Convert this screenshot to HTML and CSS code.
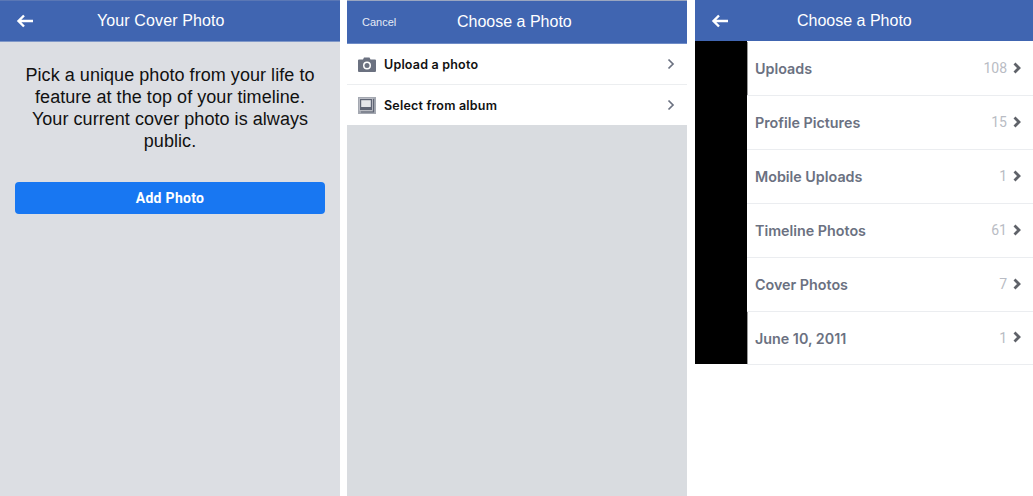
FILE: index.html
```html
<!DOCTYPE html>
<html lang="en">
<head>
<meta charset="utf-8">
<title>Choose a Photo</title>
<link rel="stylesheet" href="styles.css">
</head>
<body>
<div class="screens">
  <section class="panel panel-cover">
    <header class="bar bar-cover">
      <svg class="back" viewBox="0 0 18 14" aria-hidden="true"><path d="M17 7H3M8 1.500 2.500 7 8 12.500" /></svg>
      <h1 class="title title-cover">Your Cover Photo</h1>
    </header>
    <p class="intro">Pick a unique photo from your life to feature at the top of your timeline. Your current cover photo is always public.</p>
    <div class="btn">Add Photo</div>
  </section>

  <section class="panel panel-source">
    <header class="bar bar-source">
      <span class="cancel">Cancel</span>
      <h1 class="title title-source">Choose a Photo</h1>
    </header>
    <ul class="sources">
      <li class="source">
        <svg class="src-icon" viewBox="0 0 18 15" aria-hidden="true"><path fill="#6b7180" fill-rule="evenodd" d="M1 2.500h4L6 .5h5.500l1 2H17a1 1 0 0 1 1 1V14a1 1 0 0 1-1 1H1a1 1 0 0 1-1-1V3.500a1 1 0 0 1 1-1ZM9 4.500a4 4 0 1 0 0 8 4 4 0 0 0 0-8Z"/><circle cx="9" cy="8.500" r="2.500" fill="#6b7180"/></svg>
        <span class="src-label">Upload a photo</span>
        <svg class="chev" viewBox="0 0 8 12" aria-hidden="true"><path d="M1.500 1.500 6 6l-4.500 4.500"/></svg>
      </li>
      <li class="source">
        <svg class="src-icon src-album" viewBox="0 0 18 17" aria-hidden="true"><rect width="18" height="17" fill="#a4a8b1"/><rect x="1.500" y="1.500" width="13" height="12" fill="#fff"/><rect x="2.500" y="2.500" width="11" height="10" fill="#e4e6ea" stroke="#5f6575" stroke-width="1.400"/><rect x="3" y="10" width="10" height="2.500" fill="#5f6575"/><path d="M15.500 2v13H3" fill="none" stroke="#5f6575" stroke-width="1.200"/></svg>
        <span class="src-label">Select from album</span>
        <svg class="chev" viewBox="0 0 8 12" aria-hidden="true"><path d="M1.500 1.500 6 6l-4.500 4.500"/></svg>
      </li>
    </ul>
  </section>

  <section class="panel panel-albums">
    <header class="bar bar-albums">
      <svg class="back" viewBox="0 0 18 14" aria-hidden="true"><path d="M17 7H3M8 1.500 2.500 7 8 12.500" /></svg>
      <h1 class="title title-albums">Choose a Photo</h1>
    </header>
    <div class="albums">
      <div class="thumbs"></div>
      <ul class="album-list">
        <li class="album"><span class="album-name">Uploads</span><span class="count">108</span><svg class="chev chev-bold" viewBox="0 0 8 12" aria-hidden="true"><path d="M1.500 1.500 6 6l-4.500 4.500"/></svg></li>
        <li class="album"><span class="album-name">Profile Pictures</span><span class="count">15</span><svg class="chev chev-bold" viewBox="0 0 8 12" aria-hidden="true"><path d="M1.500 1.500 6 6l-4.500 4.500"/></svg></li>
        <li class="album"><span class="album-name">Mobile Uploads</span><span class="count">1</span><svg class="chev chev-bold" viewBox="0 0 8 12" aria-hidden="true"><path d="M1.500 1.500 6 6l-4.500 4.500"/></svg></li>
        <li class="album"><span class="album-name">Timeline Photos</span><span class="count">61</span><svg class="chev chev-bold" viewBox="0 0 8 12" aria-hidden="true"><path d="M1.500 1.500 6 6l-4.500 4.500"/></svg></li>
        <li class="album"><span class="album-name">Cover Photos</span><span class="count">7</span><svg class="chev chev-bold" viewBox="0 0 8 12" aria-hidden="true"><path d="M1.500 1.500 6 6l-4.500 4.500"/></svg></li>
        <li class="album"><span class="album-name">June 10, 2011</span><span class="count">1</span><svg class="chev chev-bold" viewBox="0 0 8 12" aria-hidden="true"><path d="M1.500 1.500 6 6l-4.500 4.500"/></svg></li>
      </ul>
    </div>
  </section>
</div>
</body>
</html>
```

FILE: styles.css
```css
* { box-sizing: border-box; }
html, body { margin: 0; padding: 0; }
body {
  width: 1033px;
  height: 496px;
  overflow: hidden;
  background: #fff;
  font-family: "Liberation Sans", Arial, sans-serif;
}
ul { list-style: none; margin: 0; padding: 0; }
h1 { margin: 0; font-weight: 400; }

.screens { display: flex; height: 496px; }
.panel { height: 496px; flex: none; }
.panel-cover { width: 340px; background: #dcdee3; margin-right: 7px; }
.panel-source { width: 340px; background: #d9dce0; margin-right: 8px; }
.panel-albums { width: 338px; background: #fff; }

.bar {
  display: flex;
  align-items: center;
  background: #4065b1;
  color: #fff;
}
.bar-cover { height: 42px; border-top: 1px solid #5a77b5; border-bottom: 1px solid #7f97c8; }
.bar-source { height: 44px; border-top: 1px solid #9aa6c0; border-bottom: 1px solid #6f8cc7; }
.bar-albums { height: 41px; }

.back {
  width: 18px;
  height: 14px;
  margin-left: 16px;
  fill: none;
  stroke: #fff;
  stroke-width: 2.4;
}
.title { font-size: 16px; line-height: 20px; }
.title-cover { margin-left: 63px; letter-spacing: .12px; }
.title-source { margin-left: 60px; }
.title-albums { margin-left: 68px; }
.cancel { font-size: 11px; margin-left: 15px; color: #e6ebf5; width: 35px; }

.intro {
  margin: 22px 20px 0;
  font-size: 18px;
  line-height: 22px;
  letter-spacing: .05px;
  text-align: center;
  color: #111;
}
.btn {
  margin: 30px 15px 0;
  height: 32px;
  border-radius: 4px;
  background: #1877f2;
  color: #fff;
  font: 700 14px/33px Roboto, "Liberation Sans", sans-serif;
  letter-spacing: .3px;
  text-align: center;
}

.sources { background: #fff; }
.source {
  display: flex;
  align-items: center;
  height: 41px;
  padding: 0 12px 0 11px;
  border-bottom: 1px solid #eceef0;
}
.source:last-child { height: 40px; border-bottom: 0; }
.src-icon { width: 18px; height: 15px; flex: none; margin-right: 8px; }
.src-album { height: 17px; }
.src-label {
  flex: 1;
  font: 600 12.500px Inter, "Liberation Sans", sans-serif;
  letter-spacing: .2px;
  color: #111;
}
.chev {
  width: 8px;
  height: 12px;
  flex: none;
  fill: none;
  stroke: #6b7180;
  stroke-width: 1.700;
}
.chev-bold { stroke: #5f6269; stroke-width: 2.800; margin-left: 6px; margin-top: -2px; }

.albums { display: flex; align-items: flex-start; }
.thumbs { width: 52px; height: 323px; background: #000; flex: none; }
.album-list { flex: 1; padding-top: 1px; }
.album {
  display: flex;
  align-items: center;
  height: 54px;
  padding: 0 12px 0 8px;
  border-bottom: 1px solid #ebedf0;
}
.album:last-child { height: 53px; }
.album:first-child, .album:last-child { box-shadow: inset 1px 0 0 #9a9a9a; }
.album-name {
  flex: 1;
  font: 600 14.300px Inter, "Liberation Sans", sans-serif;
  color: #6b7181;
}
.count { font: 400 14px Roboto, "Liberation Sans", sans-serif; color: #b9bcc4; margin-top: -1px; }
```
